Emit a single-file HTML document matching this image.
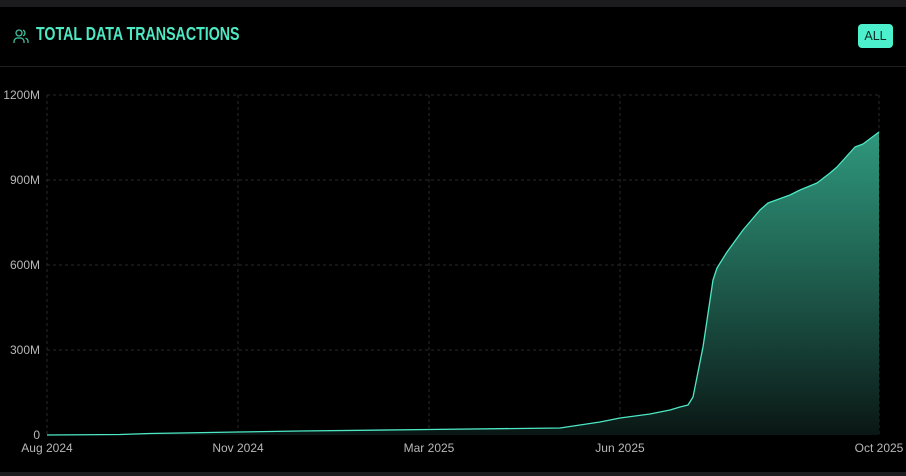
<!DOCTYPE html>
<html><head><meta charset="utf-8"><style>
body{margin:0;width:906px;height:476px;background:#000;overflow:hidden;font-family:"Liberation Sans",sans-serif;position:relative}
.top{position:absolute;left:0;top:0;width:906px;height:7px;background:#1c1c1e}
.bot{position:absolute;left:0;top:472px;width:906px;height:4px;background:#1c1c1e}
.hl{position:absolute;left:0;top:66px;width:906px;height:1px;background:#1e1e1e}
.title{position:absolute;left:36px;top:24px;color:#4de8c4;font-weight:bold;font-size:18px;transform:scaleX(0.79);transform-origin:left;white-space:nowrap}
.btn{position:absolute;left:858px;top:24px;width:35px;height:24px;background:#4df0cc;border-radius:4px;font-size:12.5px;line-height:24px;text-align:center;color:#0a2a22}
</style></head><body>
<div class="top"></div><div class="hl"></div><div class="bot"></div>
<svg style="position:absolute;left:13px;top:28px" width="16" height="16" viewBox="0 0 16 16" fill="none" stroke="#3fbf9f" stroke-width="1.3"><circle cx="6" cy="5" r="3"/><path d="M1 15v-1.5a3.5 3.5 0 0 1 3.5-3.5h3a3.5 3.5 0 0 1 3.5 3.5V15"/><path d="M10 2.2a3 3 0 0 1 0 5.6M12.5 10.2a3.3 3.3 0 0 1 2.5 3.3V15"/></svg>
<div class="title">TOTAL DATA TRANSACTIONS</div>
<div class="btn">ALL</div>
<svg style="position:absolute;left:0;top:0" width="906" height="476">
<defs><linearGradient id="g" x1="0" y1="0" x2="0" y2="1"><stop offset="0" stop-color="#34a88a" stop-opacity="0.9"/><stop offset="1" stop-color="#0a1614"/></linearGradient></defs>
<g stroke="#2a2a2a" stroke-dasharray="3 3" stroke-width="1">
<line x1="47" y1="95" x2="879" y2="95"/><line x1="47" y1="180" x2="879" y2="180"/><line x1="47" y1="265" x2="879" y2="265"/><line x1="47" y1="350" x2="879" y2="350"/>
<line x1="47" y1="95" x2="47" y2="435"/><line x1="238" y1="95" x2="238" y2="435"/><line x1="429" y1="95" x2="429" y2="435"/><line x1="620" y1="95" x2="620" y2="435"/><line x1="879" y1="95" x2="879" y2="435"/>
</g>
<path d="M47 435 L120 434.5 L150 433.5 L238 432 L300 431 L429 429.5 L560 428 L600 422 L620 418 L650 414 L670 410 L680 407 L688 405 L693 397 L703 347 L713 280 L717 268 L727 252 L743 230 L760 210 L768 203 L790 195 L800 190 L817 183 L830 173 L837 167 L855 147 L863 144 L879 132 L879 435 Z" fill="url(#g)"/>
<path d="M47 435 L120 434.5 L150 433.5 L238 432 L300 431 L429 429.5 L560 428 L600 422 L620 418 L650 414 L670 410 L680 407 L688 405 L693 397 L703 347 L713 280 L717 268 L727 252 L743 230 L760 210 L768 203 L790 195 L800 190 L817 183 L830 173 L837 167 L855 147 L863 144 L879 132" fill="none" stroke="#4de8c4" stroke-width="1.3" stroke-linejoin="round"/>
<g fill="#b8b8b8" font-size="12" font-family="Liberation Sans,sans-serif" text-anchor="end">
<text x="40" y="99">1200M</text><text x="40" y="184">900M</text><text x="40" y="269">600M</text><text x="40" y="354">300M</text><text x="40" y="439">0</text>
</g>
<g fill="#b8b8b8" font-size="12" font-family="Liberation Sans,sans-serif" text-anchor="middle">
<text x="47" y="452">Aug 2024</text><text x="238" y="452">Nov 2024</text><text x="429" y="452">Mar 2025</text><text x="620" y="452">Jun 2025</text><text x="879" y="452">Oct 2025</text>
</g>
</svg>
</body></html>
